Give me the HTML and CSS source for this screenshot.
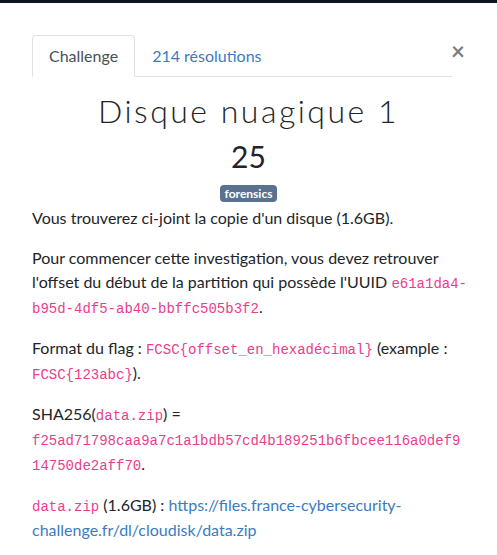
FILE: index.html
```html
<!DOCTYPE html>
<html lang="fr">
<head>
<meta charset="utf-8">
<title>Disque nuagique 1</title>
<link rel="stylesheet" href="styles.css">
</head>
<body>
<div class="modal">
  <div class="modal-head">
    <ul class="tabs">
      <li class="tab active">Challenge</li>
      <li class="tab"><a href="#">214 résolutions</a></li>
    </ul>
    <button class="close" type="button">×</button>
  </div>
  <div class="challenge">
    <h2 class="title">Disque nuagique 1</h2>
    <h3 class="points">25</h3>
    <div class="tags"><span class="badge">forensics</span></div>
  </div>
  <div class="desc">
    <p>Vous trouverez ci-joint la copie d'un disque (1.6GB).</p>
    <p>Pour commencer cette investigation, vous devez retrouver l'offset du début de la partition qui possède l'UUID <code>e61a1da4-<wbr>b95d-<wbr>4df5-<wbr>ab40-<wbr>bbffc505b3f2</code>.</p>
    <p>Format du flag : <code>FCSC{offset_en_hexadécimal}</code> (example : <code>FCSC{123abc}</code>).</p>
    <p>SHA256(<code>data.zip</code>) = <code>f25ad71798caa9a7c1a1bdb57cd4b189251b6fbcee116a0def914750de2aff70</code>.</p>
    <p><code>data.zip</code> (1.6GB) : <a href="#">https://files.france-cybersecurity-challenge.fr/dl/cloudisk/data.zip</a></p>
  </div>
</div>
</body>
</html>
```

FILE: styles.css
```css
html, body {
  margin: 0;
  padding: 0;
}
body {
  background: #0b1420;
  font-family: Lato, "Liberation Sans", sans-serif;
  font-size: 16px;
  line-height: 24px;
  color: #212529;
}
.modal {
  margin-top: 3px;
  background: #fff;
  padding: 32px 30px 40px 32px;
  min-height: 520px;
}
.modal-head {
  display: flex;
  align-items: flex-start;
  margin-right: 2px;
}
.tabs {
  flex: 1;
  display: flex;
  list-style: none;
  margin: 0;
  padding: 0;
  border-bottom: 1px solid #dee2e6;
}
.tab {
  margin-bottom: -1px;
  padding: 8px 16px;
  border: 1px solid transparent;
  border-top-left-radius: 4px;
  border-top-right-radius: 4px;
}
.tab.active {
  border-color: #dee2e6 #dee2e6 #fff;
  color: #495057;
}
.tab a {
  color: #3b7bbf;
  text-decoration: none;
}
.close {
  width: 13px;
  padding: 0;
  margin: 0;
  border: 0;
  background: none;
  font-family: Lato, "Liberation Sans", sans-serif;
  font-size: 24px;
  font-weight: 700;
  line-height: 24px;
  color: #000;
  opacity: .5;
  margin-top: 4px;
  display: flex;
  justify-content: flex-end;
}
.challenge {
  text-align: center;
  margin-right: 2px;
}
.title {
  margin: 15px 0 0;
  font-family: Lato, "Liberation Sans", sans-serif;
  font-weight: 300;
  font-size: 32px;
  line-height: 38px;
  letter-spacing: 2.5px;
  color: #212529;
}
.points {
  margin: 8px 0 0;
  font-weight: 400;
  font-size: 30px;
  line-height: 36px;
  color: #212529;
}
.tags {
  margin-top: 9px;
  line-height: 17px;
}
.badge {
  display: inline-block;
  background: #5a7190;
  color: #fff;
  font-size: 12px;
  font-weight: 700;
  line-height: 17px;
  padding: 0 5px;
  border-radius: 4px;
}
.desc {
  margin-top: 4px;
}
.desc p {
  margin: 0 0 16px;
}
code {
  font-family: "Liberation Mono", monospace;
  font-size: 87.5%;
  line-height: 22px;
  color: #e83e8c;
  word-wrap: break-word;
}
.desc a {
  color: #3b7bbf;
  text-decoration: none;
}
```
